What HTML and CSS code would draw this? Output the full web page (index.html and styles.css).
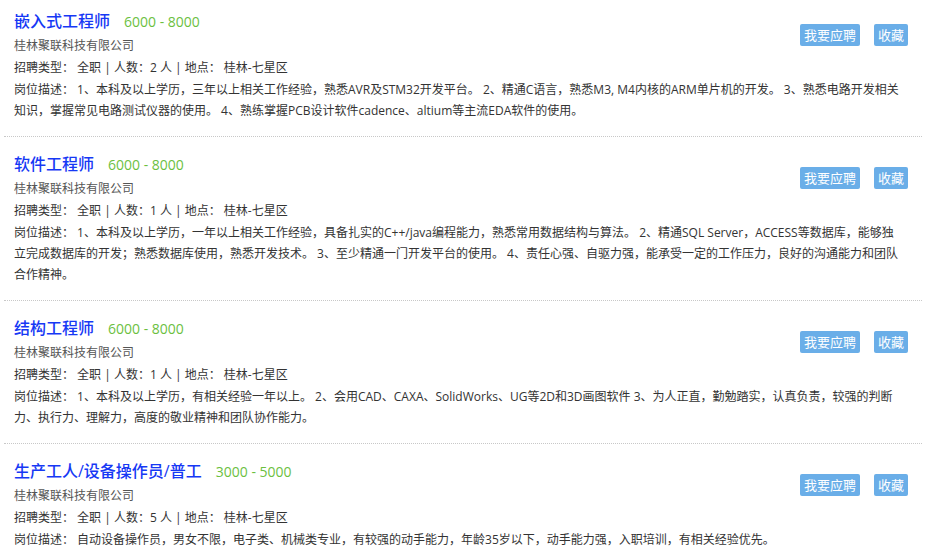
FILE: index.html
```html
<!DOCTYPE html>
<html lang="zh-CN">
<head>
    <meta charset="UTF-8">
    <meta name="viewport" content="width=device-width, initial-scale=1.0">
    <title>招聘职位</title>
    <link rel="stylesheet" href="styles.css">
</head>
<body>

    <ul class="job-list">
        <li class="job">
            <div class="job-head">
                <div class="job-info">
                    <h3><a href="#">嵌入式工程师</a><span class="salary">6000 - 8000</span></h3>
                    <p class="company">桂林聚联科技有限公司</p>
                    <p>招聘类型： 全职 | 人数：2 人 | 地点： 桂林-七星区</p>
                </div>
                <div class="job-actions">
                    <button>我要应聘</button>
                    <button>收藏</button>
                </div>
            </div>
            <p class="desc">岗位描述： 1、本科及以上学历，三年以上相关工作经验，熟悉AVR及STM32开发平台。 2、精通C语言，熟悉M3, M4内核的ARM单片机的开发。 3、熟悉电路开发相关知识，掌握常见电路测试仪器的使用。 4、熟练掌握PCB设计软件cadence、altium等主流EDA软件的使用。</p>
        </li>
        <li class="job">
            <div class="job-head">
                <div class="job-info">
                    <h3><a href="#">软件工程师</a><span class="salary">6000 - 8000</span></h3>
                    <p class="company">桂林聚联科技有限公司</p>
                    <p>招聘类型： 全职 | 人数：1 人 | 地点： 桂林-七星区</p>
                </div>
                <div class="job-actions">
                    <button>我要应聘</button>
                    <button>收藏</button>
                </div>
            </div>
            <p class="desc">岗位描述： 1、本科及以上学历，一年以上相关工作经验，具备扎实的C++/java编程能力，熟悉常用数据结构与算法。 2、精通SQL Server，ACCESS等数据库，能够独立完成数据库的开发；熟悉数据库使用，熟悉开发技术。 3、至少精通一门开发平台的使用。 4、责任心强、自驱力强，能承受一定的工作压力，良好的沟通能力和团队合作精神。</p>
        </li>
        <li class="job">
            <div class="job-head">
                <div class="job-info">
                    <h3><a href="#">结构工程师</a><span class="salary">6000 - 8000</span></h3>
                    <p class="company">桂林聚联科技有限公司</p>
                    <p>招聘类型： 全职 | 人数：1 人 | 地点： 桂林-七星区</p>
                </div>
                <div class="job-actions">
                    <button>我要应聘</button>
                    <button>收藏</button>
                </div>
            </div>
            <p class="desc">岗位描述： 1、本科及以上学历，有相关经验一年以上。 2、会用CAD、CAXA、SolidWorks、UG等2D和3D画图软件 3、为人正直，勤勉踏实，认真负责，较强的判断力、执行力、理解力，高度的敬业精神和团队协作能力。</p>
        </li>
        <li class="job">
            <div class="job-head">
                <div class="job-info">
                    <h3><a href="#">生产工人/设备操作员/普工</a><span class="salary">3000 - 5000</span></h3>
                    <p class="company">桂林聚联科技有限公司</p>
                    <p>招聘类型： 全职 | 人数：5 人 | 地点： 桂林-七星区</p>
                </div>
                <div class="job-actions">
                    <button>我要应聘</button>
                    <button>收藏</button>
                </div>
            </div>
            <p class="desc">岗位描述： 自动设备操作员，男女不限，电子类、机械类专业，有较强的动手能力，年龄35岁以下，动手能力强，入职培训，有相关经验优先。</p>
        </li>
    </ul>

</body>
</html>
```

FILE: styles.css
```css
body {
    margin: 0;
    font-family: "Open Sans", "Noto Sans CJK SC", sans-serif;
    font-size: 12px;
    color: #333;
    background: #fff;
}
p {
    margin: 0;
    line-height: 22px;
}
.job-list {
    list-style: none;
    margin: 0 11px 0 4px;
    padding: 0;
}
.job {
    padding: 14px 14px 15px 10px;
    border-bottom: 1px dotted #c8c8c8;
}
.job:first-child {
    padding-top: 8px;
}
.job-head {
    display: flex;
    justify-content: space-between;
    align-items: flex-start;
}
.job h3 {
    margin: 0;
    font-size: 16px;
    font-weight: 500;
    line-height: 26px;
}
.job h3 a {
    color: #1638f5;
    text-decoration: none;
}
.salary {
    margin-left: 14px;
    font-size: 14px;
    font-weight: normal;
    color: #6cbf3f;
}
.company {
    color: #555;
}
.job-actions {
    display: flex;
    gap: 14px;
    margin-top: 16px;
}
.job-actions button {
    height: 22px;
    padding: 0 4px;
    border: none;
    border-radius: 2px;
    background: #6aaee8;
    color: #fff;
    font-family: "Open Sans", "Noto Sans CJK SC", sans-serif;
    font-size: 13px;
    line-height: 22px;
    cursor: pointer;
}
.job-actions button:hover {
    background: #4f9ade;
}
.desc {
    max-width: 890px;
    line-height: 21px;
}
```
